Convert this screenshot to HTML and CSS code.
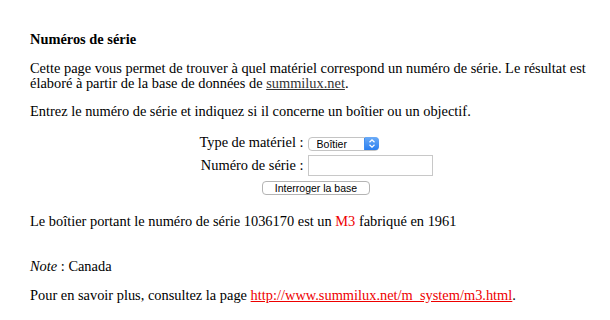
FILE: index.html
```html
<!DOCTYPE html>
<html lang="fr">
<head>
    <meta charset="UTF-8">
    <title>Numéros de série</title>
    <link rel="stylesheet" href="styles.css">
</head>
<body>
    <h1 class="title">Numéros de série</h1>

    <p>Cette page vous permet de trouver à quel matériel correspond un numéro de série. Le résultat est élaboré à partir de la base de données de <a href="#" class="site-link">summilux.net</a>.</p>

    <p>Entrez le numéro de série et indiquez si il concerne un boîtier ou un objectif.</p>

    <form class="lookup">
        <table class="lookup-table">
            <tr>
                <td class="label">Type de matériel :</td>
                <td>
                    <span class="select-wrap">
                        <select class="kind">
                            <option>Boîtier</option>
                            <option>Objectif</option>
                        </select>
                        <svg class="stepper" width="14" height="13" viewBox="0 0 14 13">
                            <path d="M4.5 5.2 L7 2.8 L9.5 5.2 M4.5 7.8 L7 10.2 L9.5 7.8" fill="none" stroke="#fff" stroke-width="1.2"/>
                        </svg>
                    </span>
                </td>
            </tr>
            <tr>
                <td class="label">Numéro de série :</td>
                <td><input type="text" class="serial"></td>
            </tr>
            <tr>
                <td colspan="2" class="submit-cell"><button type="button" class="submit">Interroger la base</button></td>
            </tr>
        </table>
    </form>

    <p class="result">Le boîtier portant le numéro de série 1036170 est un <span class="model">M3</span> fabriqué en 1961</p>

    <p class="note"><em>Note</em> : Canada</p>

    <p>Pour en savoir plus, consultez la page <a href="#" class="more-link">http://www.summilux.net/m_system/m3.html</a>.</p>
</body>
</html>
```

FILE: styles.css
```css
body {
    font-family: "Liberation Serif", "Times New Roman", serif;
    font-size: 14.4px;
    line-height: 15px;
    margin: 0;
    padding: 32px 8px 0 30px;
    background-color: #fff;
    color: #000;
}

.title {
    font-size: 14.4px;
    font-weight: bold;
    margin: 0 0 14px;
}

p {
    margin: 0 0 13px;
}

.site-link {
    color: #333;
}

.lookup {
    margin: 0;
}

.lookup-table {
    margin: 0 auto;
    border-collapse: separate;
    border-spacing: 2px;
}

.lookup-table td {
    padding: 1px;
}

.label {
    text-align: right;
}

.select-wrap {
    position: relative;
    display: inline-block;
    vertical-align: middle;
}

.kind {
    -webkit-appearance: none;
    appearance: none;
    width: 71px;
    height: 14px;
    padding: 0 0 0 8px;
    border: 1px solid #c4c4c4;
    border-radius: 4px;
    background: linear-gradient(to left, #3f8ef2 14px, #fff 14px);
    font-family: "Liberation Sans", Arial, sans-serif;
    font-size: 10.5px;
    line-height: 12px;
    color: #000;
    display: block;
}

.stepper {
    position: absolute;
    right: 0;
    top: 0;
    border-radius: 0 4px 4px 0;
    background: linear-gradient(#6cacf7, #2a7ef0);
}

.serial {
    width: 121px;
    height: 17px;
    padding: 1px;
    border: 1px solid #c8c8c8;
    vertical-align: middle;
}

.submit-cell {
    text-align: center;
}

.submit {
    width: 108px;
    height: 14px;
    padding: 0;
    border: 1px solid #b4b4b4;
    border-radius: 4px;
    background: #fff;
    font-family: "Liberation Sans", Arial, sans-serif;
    font-size: 10.5px;
    line-height: 12px;
    color: #000;
}

.result {
    margin: 16px 0 30px;
}

.note {
    margin-bottom: 14px;
}

.model {
    color: #e00;
}

.more-link {
    color: #e00;
}
```
